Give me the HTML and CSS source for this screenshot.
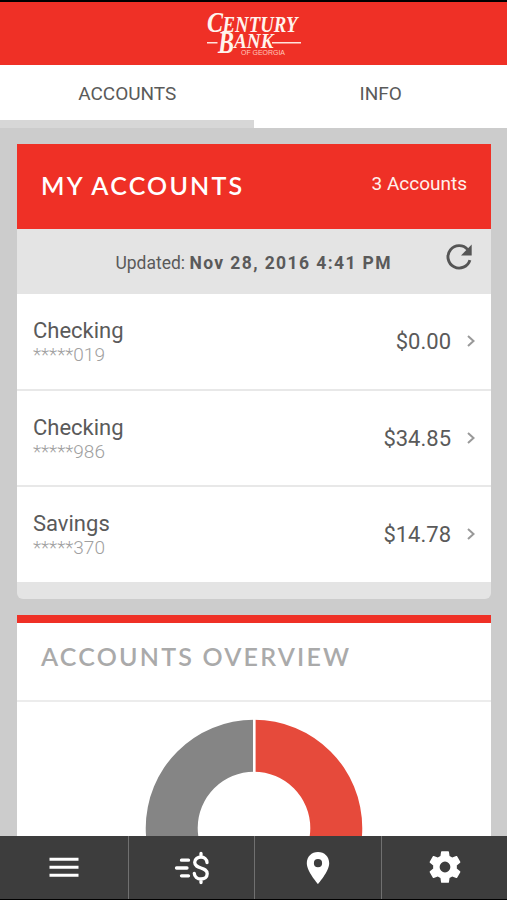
FILE: index.html
```
<!DOCTYPE html>
<html lang="en">
<head>
<meta charset="utf-8">
<title>Century Bank of Georgia</title>
<link rel="stylesheet" href="styles.css">
</head>
<body>
<div class="app">
  <header class="brand">
    <svg class="logo" width="108" height="63" viewBox="200 2 108 63" role="img" aria-label="Century Bank of Georgia">
      <g class="logo-serif">
        <text x="207" y="32" font-size="30" textLength="16" lengthAdjust="spacingAndGlyphs">C</text>
        <text x="222.500" y="31.500" font-size="22.500" textLength="75" lengthAdjust="spacingAndGlyphs">ENTURY</text>
        <text x="218" y="53" font-size="31" textLength="16" lengthAdjust="spacingAndGlyphs">B</text>
        <text x="234" y="48" font-size="20.500" textLength="39.500" lengthAdjust="spacingAndGlyphs">ANK</text>
      </g>
      <path d="M207 42.700h10.500M272 42.700h29" stroke="#ffe3dc" stroke-width="1.500"/>
      <text class="logo-sans" x="241" y="55" font-size="6.500" textLength="44" lengthAdjust="spacingAndGlyphs">OF GEORGIA</text>
    </svg>
  </header>
  <nav class="tabs">
    <a class="tab active">ACCOUNTS</a>
    <a class="tab">INFO</a>
  </nav>
  <main class="content">
    <section class="card accounts">
      <div class="card-head">
        <h1>MY ACCOUNTS</h1>
        <span class="count">3 Accounts</span>
      </div>
      <div class="updated">
        <p>Updated: <b>Nov 28, 2016 4:41 PM</b></p>
        <svg class="refresh" width="28" height="28" viewBox="0 0 28 28"><path d="M24.900 17.100A11.200 11.200 0 1 1 22.700 6.600" fill="none" stroke="#555" stroke-width="2.900"/><path d="M26.700 1.500v11H16z" fill="#555"/></svg>
      </div>
      <ul class="rows">
        <li><div class="name">Checking<small>*****019</small></div><span class="amount">$0.00</span><svg class="chev" width="8" height="12" viewBox="0 0 8 12"><path d="M1 1l5.500 5L1 11"/></svg></li>
        <li><div class="name">Checking<small>*****986</small></div><span class="amount">$34.85</span><svg class="chev" width="8" height="12" viewBox="0 0 8 12"><path d="M1 1l5.500 5L1 11"/></svg></li>
        <li><div class="name">Savings<small>*****370</small></div><span class="amount">$14.78</span><svg class="chev" width="8" height="12" viewBox="0 0 8 12"><path d="M1 1l5.500 5L1 11"/></svg></li>
      </ul>
    </section>
    <section class="card overview">
      <h2>ACCOUNTS OVERVIEW</h2>
      <svg class="donut" width="218" height="218" viewBox="-109 -109 218 218">
        <path d="M0-108.300A108.300 108.300 0 0 1 0 108.300V56.300A56.300 56.300 0 0 0 0-56.300z" fill="#e64a3b"/>
        <path d="M0-108.300A108.300 108.300 0 0 0 0 108.300V56.300A56.300 56.300 0 0 1 0-56.300z" fill="#858585"/>
        <path d="M.3-109V109" stroke="#fff" stroke-width="2.600"/>
      </svg>
    </section>
  </main>
  <nav class="bottom">
    <a><svg width="32" height="32" viewBox="0 0 32 32"><path d="M1.500 7.300h29M1.500 15.300h29M1.500 23.300h29" stroke="#fff" stroke-width="3"/></svg></a>
    <a><svg class="pay" width="36" height="34" viewBox="0 0 36 34" fill="none" stroke="#fff" stroke-width="3.300" stroke-linecap="round"><path d="M8.500 9.200h7M3.500 17h10.500M8.500 24.800h7"/><path d="M34 11.500C33.800 8 31 6 28 6s-6.300 2-6.300 5.200c0 7.300 12.500 4.300 12.500 11.600 0 3.300-2.700 5.200-6.200 5.200-3.700 0-6.500-2.200-6.700-5.700M28 2.500V6M28 28v3.500"/></svg></a>
    <a><svg width="24" height="32" viewBox="0 0 24 32"><path d="M12 0C5.500 0 .8 4.800.8 11.200.8 19.300 12 32 12 32s11.200-12.700 11.200-20.800C23.200 4.800 18.500 0 12 0zm0 15.300a4.100 4.100 0 1 1 0-8.200 4.100 4.100 0 0 1 0 8.200z" fill="#fff"/></svg></a>
    <a><svg class="gear" width="38" height="38" viewBox="0 0 24 24"><path d="M19.430 12.980c.04-.32.070-.64.070-.98s-.03-.66-.07-.98l2.110-1.650c.19-.15.240-.42.120-.64l-2-3.460c-.12-.22-.39-.3-.61-.22l-2.490 1c-.52-.4-1.080-.73-1.690-.98l-.38-2.650C14.460 2.180 14.250 2 14 2h-4c-.25 0-.46.180-.49.420l-.38 2.650c-.61.250-1.170.590-1.690.980l-2.490-1c-.23-.09-.49 0-.61.220l-2 3.460c-.13.220-.07.490.12.640l2.110 1.650c-.04.320-.07.650-.07.980s.03.660.07.980l-2.110 1.650c-.19.150-.24.420-.12.640l2 3.460c.12.220.39.300.61.220l2.490-1c.52.400 1.080.730 1.690.980l.38 2.650c.03.240.24.420.49.420h4c.25 0 .46-.18.490-.42l.38-2.650c.61-.25 1.170-.59 1.690-.98l2.490 1c.23.090.49 0 .61-.22l2-3.460c.12-.22.070-.49-.12-.64l-2.110-1.650zM12 15.400a3.400 3.400 0 1 1 0-6.800 3.400 3.400 0 0 1 0 6.800z" fill="#fff"/></svg></a>
  </nav>
</div>
</body>
</html>
```
FILE: styles.css
```
* { box-sizing: border-box; }
body { margin: 0; font-family: Roboto, "Liberation Sans", sans-serif; color: #5a5a5a; }
.app { width: 507px; height: 900px; display: flex; flex-direction: column; overflow: hidden; background: #ccc; border-top: 2px solid #000; border-bottom: 1px solid #000; }
.brand { flex: none; height: 63px; background: #ef3026; display: flex; justify-content: center; }
.logo-serif { font-family: "Liberation Serif", serif; font-style: italic; font-weight: bold; fill: #fff4ee; }
.logo-sans { font-family: "Liberation Sans", sans-serif; fill: #ffc9bd; }
.tabs { flex: none; height: 63px; display: flex; background: #fff; }
.tab { flex: 1; display: flex; justify-content: center; padding: 18px 0 0 1px; font-size: 19px; line-height: 22px; }
.tab.active { border-bottom: 8px solid #d7d7d7; }
.content { flex: 1; min-height: 0; overflow: hidden; padding: 16px 16px 0 17px; display: flex; flex-direction: column; gap: 16px; }
.card { flex: none; background: #fff; }
.accounts { height: 455px; background: #e4e4e4; border-radius: 0 0 6px 6px; overflow: hidden; }
.card-head { height: 85px; background: #ef3026; color: #fff; display: flex; justify-content: space-between; align-items: center; padding: 0 24px; }
h1, h2 { margin: 0; font-family: Lato, sans-serif; font-weight: 600; font-size: 25px; line-height: 30px; letter-spacing: 2.2px; }
h1 { padding-bottom: 4px; }
.count { font-size: 19px; padding-bottom: 7px; color: #fff0ec; }
.updated { height: 65px; display: flex; align-items: center; justify-content: flex-end; gap: 53px; padding-right: 18px; }
.updated p { margin: 0; font-size: 17.5px; padding-top: 2px; white-space: nowrap; }
.updated b { letter-spacing: 1.4px; }
.refresh { margin-bottom: 9px; }
.rows { list-style: none; margin: 0; padding: 0; background: #fff; }
.rows li { height: 96.5px; display: flex; align-items: center; padding: 0 16px; border-bottom: 2px solid #e8e8e8; }
.rows li:last-child { border: 0; height: 95px; padding-bottom: 2px; }
.name { flex: 1; font-size: 22px; line-height: 27px; padding-top: 1px; }
.name small { display: block; font-size: 19px; line-height: 22px; font-weight: 300; color: #a0a0a0; }
.amount { font-size: 22px; margin-right: 16px; padding-top: 1px; }
.chev { fill: none; stroke: #999; stroke-width: 2; }
.overview { height: 400px; border-top: 8px solid #ef3026; display: flex; flex-direction: column; align-items: center; }
.overview h2 { width: 100%; height: 79px; padding: 18px 24px 0; color: #aaa; border-bottom: 2px solid #ececec; }
.donut { margin-top: 17px; }
.bottom { flex: none; height: 63px; background: #3d3d3d; display: grid; grid-template-columns: 129px 126px 127px 125px; }
.bottom a { display: flex; align-items: center; justify-content: center; border-right: 1px solid #707070; }
.bottom a:last-child { border: 0; }
.pay { margin-right: 2px; }
.gear { margin-bottom: 2px; }
```
